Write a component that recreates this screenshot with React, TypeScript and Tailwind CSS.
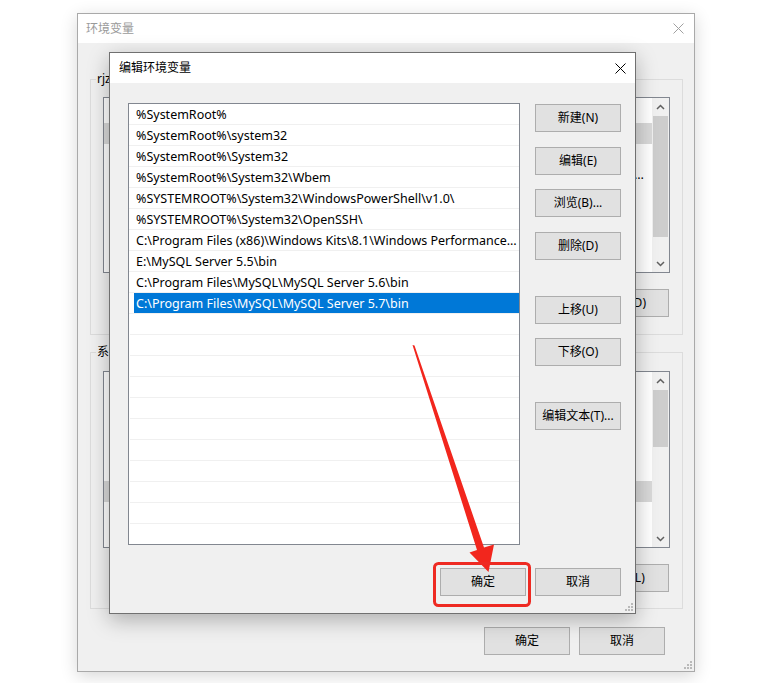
import React from 'react';

const paths = [
  '%SystemRoot%',
  '%SystemRoot%\\system32',
  '%SystemRoot%\\System32',
  '%SystemRoot%\\System32\\Wbem',
  '%SYSTEMROOT%\\System32\\WindowsPowerShell\\v1.0\\',
  '%SYSTEMROOT%\\System32\\OpenSSH\\',
  'C:\\Program Files (x86)\\Windows Kits\\8.1\\Windows Performance Toolkit\\',
  'E:\\MySQL Server 5.5\\bin',
  'C:\\Program Files\\MySQL\\MySQL Server 5.6\\bin',
  'C:\\Program Files\\MySQL\\MySQL Server 5.7\\bin',
];

const userVars = [
  { name: 'OneDrive', value: 'C:\\Users\\rjz\\OneDrive', selected: true },
  { name: 'OneDriveConsumer', value: 'C:\\Users\\rjz\\OneDrive' },
  { name: 'Path', value: 'C:\\Users\\rjz\\AppData\\Local\\Microsoft\\WindowsApps;C:\\Program Files\\MySQL\\MySQL Server 5.7\\bin;' },
  { name: 'TEMP', value: 'C:\\Users\\rjz\\AppData\\Local\\Temp' },
  { name: 'TMP', value: 'C:\\Users\\rjz\\AppData\\Local\\Temp' },
];

const systemVars = [
  { name: 'ComSpec', value: 'C:\\Windows\\system32\\cmd.exe' },
  { name: 'DriverData', value: 'C:\\Windows\\System32\\Drivers\\DriverData' },
  { name: 'NUMBER_OF_PROCESSORS', value: '8' },
  { name: 'OS', value: 'Windows_NT' },
  { name: 'Path', value: 'C:\\Program Files\\MySQL\\MySQL Server 5.7\\bin;%SystemRoot%\\system32;%SystemRoot%;%SystemRoot%\\System32\\Wbem;', selected: true },
  { name: 'PATHEXT', value: '.COM;.EXE;.BAT;.CMD;.VBS' },
  { name: 'PROCESSOR_ARCHITECTURE', value: 'AMD64' },
];

const WinButton = ({ label, className = '' }: { label: string; className?: string }) => (
  <div
    className={`flex h-[28px] w-[86px] shrink-0 items-center justify-center border border-[#adadad] bg-[#e1e1e1] text-[12px] text-black ${className}`}
  >
    {label}
  </div>
);

const CloseIcon = ({ color }: { color: string }) => (
  <svg width="11" height="11" viewBox="0 0 11 11">
    <path d="M0.5 0.5 L10.5 10.5 M10.5 0.5 L0.5 10.5" stroke={color} strokeWidth="1" />
  </svg>
);

const Grip = () => (
  <svg width="10" height="10" viewBox="0 0 10 10">
    <rect x="8" y="2" width="2" height="2" fill="#b9b9b9" />
    <rect x="5" y="5" width="2" height="2" fill="#b9b9b9" />
    <rect x="8" y="5" width="2" height="2" fill="#b9b9b9" />
    <rect x="2" y="8" width="2" height="2" fill="#b9b9b9" />
    <rect x="5" y="8" width="2" height="2" fill="#b9b9b9" />
    <rect x="8" y="8" width="2" height="2" fill="#b9b9b9" />
  </svg>
);

const Scrollbar = ({ thumb }: { thumb: string }) => (
  <div className="flex w-[17px] flex-col bg-[#f0f0f0]">
    <div className="flex h-[17px] items-center justify-center">
      <svg width="9" height="6" viewBox="0 0 9 6">
        <polyline points="1,5 4.5,1.5 8,5" fill="none" stroke="#606060" strokeWidth="1.5" />
      </svg>
    </div>
    <div className={`mx-[1px] mt-[1px] bg-[#cdcdcd] ${thumb}`} />
    <div className="flex-1" />
    <div className="flex h-[17px] items-center justify-center">
      <svg width="9" height="6" viewBox="0 0 9 6">
        <polyline points="1,1 4.5,4.5 8,1" fill="none" stroke="#606060" strokeWidth="1.5" />
      </svg>
    </div>
  </div>
);

type Var = { name: string; value: string; selected?: boolean };

const VarList = ({ vars, height, thumb, valuePad }: { vars: Var[]; height: string; thumb: string; valuePad: string }) => (
  <div className={`flex border border-[#828790] bg-white ${height}`}>
    <div className="min-w-0 flex-1 overflow-hidden pt-[25px]">
      {vars.map((v) => (
        <div
          key={v.name}
          className={`flex h-[21px] items-center text-[12.5px] text-black ${v.selected ? 'bg-[#d9d9d9]' : ''}`}
        >
          <span className="w-[150px] shrink-0 truncate pl-[6px]">{v.name}</span>
          <span className={`min-w-0 flex-1 truncate ${valuePad}`}>{v.value}</span>
        </div>
      ))}
    </div>
    <Scrollbar thumb={thumb} />
  </div>
);

const GroupBox = ({ label, children, className = '' }: { label: string; children: React.ReactNode; className?: string }) => (
  <div className={`relative flex flex-col border border-[#dcdcdc] px-[12px] ${className}`}>
    <span className="absolute -top-[9px] left-[5px] bg-[#f0f0f0] px-[1px] text-[12px] leading-[16px] text-black">{label}</span>
    {children}
  </div>
);

export default function App() {
  return (
    <div className="relative h-[683px] w-[771px] overflow-hidden bg-white pl-[77px] pt-[13px] font-['Noto_Sans','Noto_Sans_CJK_SC',sans-serif]">
      {/* 环境变量 (background window) */}
      <div className="relative flex h-[659px] w-[618px] flex-col border border-[#a9a9a9] bg-[#f0f0f0] shadow-[0_4px_16px_rgba(0,0,0,0.16)]">
        <div className="flex h-[29px] shrink-0 items-center justify-between bg-white pl-[8px] pr-[10px] text-[12px] text-[#9a9a9a]">
          <span>环境变量</span>
          <CloseIcon color="#a0a0a0" />
        </div>
        <div className="flex flex-1 flex-col pl-[12px] pr-[11px] pt-[36px]">
          <GroupBox label="rjz 的用户变量(U)" className="h-[256px] pt-[17px]">
            <VarList vars={userVars} height="h-[176px]" thumb="h-[121px]" valuePad="pr-[7px]" />
            <div className="mt-[16px] flex justify-end gap-[9px] pr-[1px]">
              <WinButton label="新建(N)..." />
              <WinButton label="编辑(E)..." />
              <WinButton label="删除(D)" />
            </div>
          </GroupBox>
          <GroupBox label="系统变量(S)" className="mt-[17px] h-[257px] pt-[18px]">
            <VarList vars={systemVars} height="h-[177px]" thumb="h-[57px]" valuePad="pr-[12px]" />
            <div className="mt-[16px] flex justify-end gap-[9px] pr-[1px]">
              <WinButton label="新建(W)..." />
              <WinButton label="编辑(I)..." />
              <WinButton label="删除(L)" />
            </div>
          </GroupBox>
          <div className="mt-[18px] flex justify-end gap-[9px] pr-[18px]">
            <WinButton label="确定" />
            <WinButton label="取消" />
          </div>
        </div>
        <div className="absolute bottom-[2px] right-[2px]">
          <Grip />
        </div>
      </div>

      {/* 编辑环境变量 (dialog on top) */}
      <div className="absolute left-[109px] top-[52px] flex h-[562px] w-[527px] flex-col border border-[#707070] bg-[#f0f0f0] shadow-[0_6px_20px_rgba(0,0,0,0.28)]">
        <div className="flex h-[30px] shrink-0 items-center justify-between bg-white pl-[9px] pr-[9px] text-[12px] text-black">
          <span>编辑环境变量</span>
          <CloseIcon color="#000000" />
        </div>
        <div className="relative flex flex-1 flex-col pl-[18px] pr-[14px] pt-[20px]">
          <div className="flex">
            <div className="h-[442px] w-[392px] overflow-hidden border border-[#828790] bg-white">
              {paths.map((p, i) => (
                <div key={p} className="h-[21px] border-b border-[#f0f0f0] pl-[5px]">
                  <div
                    className={`h-[20px] truncate pl-[2px] pt-[2px] text-[12.5px] leading-[18px] ${
                      i === paths.length - 1 ? 'bg-[#0078d7] text-white' : 'text-black'
                    }`}
                  >
                    {p}
                  </div>
                </div>
              ))}
              {Array.from({ length: 11 }).map((_, i) => (
                <div key={i} className="ml-[1px] h-[21px] border-b border-[#f0f0f0]" />
              ))}
            </div>
            <div className="ml-[15px] flex flex-col pt-[1px]">
              <WinButton label="新建(N)" />
              <WinButton label="编辑(E)" className="mt-[15px]" />
              <WinButton label="浏览(B)..." className="mt-[14px]" />
              <WinButton label="删除(D)" className="mt-[15px]" />
              <WinButton label="上移(U)" className="mt-[36px]" />
              <WinButton label="下移(O)" className="mt-[14px]" />
              <WinButton label="编辑文本(T)..." className="mt-[36px]" />
            </div>
          </div>
          <div className="mt-[23px] flex justify-end gap-[9px]">
            <WinButton label="确定" />
            <WinButton label="取消" />
          </div>
          <div className="absolute bottom-[2px] right-[2px]">
            <Grip />
          </div>
        </div>
      </div>

      {/* annotation: red arrow and highlight box */}
      <svg className="pointer-events-none absolute left-0 top-0" width="771" height="683" viewBox="0 0 771 683">
        <polygon
          points="412.5,345 414.5,345.5 484,547.5 494,544.5 488.5,572 469.5,552.5 477,550"
          fill="#f2261d"
        />
        <rect x="434.5" y="563.5" width="95" height="42" rx="4" fill="none" stroke="#ee2a22" strokeWidth="3" />
      </svg>
    </div>
  );
}
